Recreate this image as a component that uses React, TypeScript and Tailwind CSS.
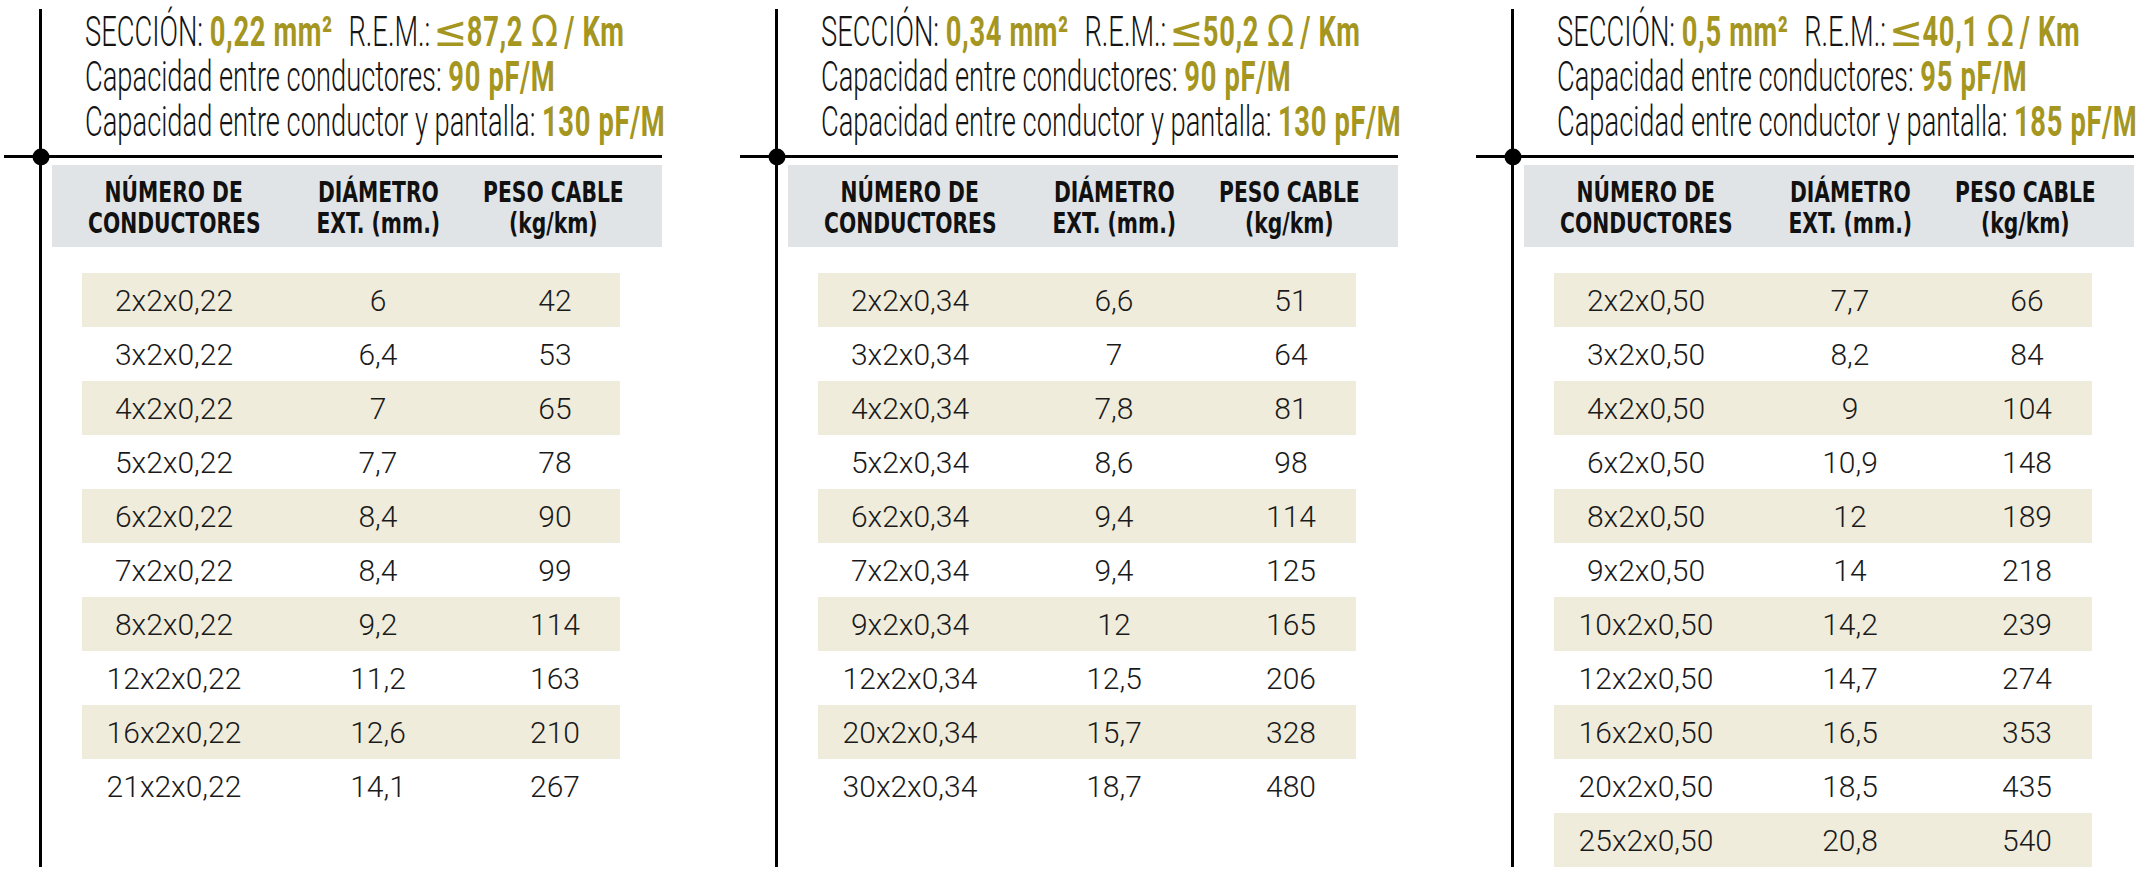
type Row = [string, string, string]

type Panel = {
  sec: string
  rem: string
  cc: string
  cp: string
  rows: Row[]
}

const panels: Panel[] = [
  {
    sec: "0,22",
    rem: "87,2",
    cc: "90",
    cp: "130",
    rows: [
      ["2x2x0,22", "6", "42"],
      ["3x2x0,22", "6,4", "53"],
      ["4x2x0,22", "7", "65"],
      ["5x2x0,22", "7,7", "78"],
      ["6x2x0,22", "8,4", "90"],
      ["7x2x0,22", "8,4", "99"],
      ["8x2x0,22", "9,2", "114"],
      ["12x2x0,22", "11,2", "163"],
      ["16x2x0,22", "12,6", "210"],
      ["21x2x0,22", "14,1", "267"],
    ],
  },
  {
    sec: "0,34",
    rem: "50,2",
    cc: "90",
    cp: "130",
    rows: [
      ["2x2x0,34", "6,6", "51"],
      ["3x2x0,34", "7", "64"],
      ["4x2x0,34", "7,8", "81"],
      ["5x2x0,34", "8,6", "98"],
      ["6x2x0,34", "9,4", "114"],
      ["7x2x0,34", "9,4", "125"],
      ["9x2x0,34", "12", "165"],
      ["12x2x0,34", "12,5", "206"],
      ["20x2x0,34", "15,7", "328"],
      ["30x2x0,34", "18,7", "480"],
    ],
  },
  {
    sec: "0,5",
    rem: "40,1",
    cc: "95",
    cp: "185",
    rows: [
      ["2x2x0,50", "7,7", "66"],
      ["3x2x0,50", "8,2", "84"],
      ["4x2x0,50", "9", "104"],
      ["6x2x0,50", "10,9", "148"],
      ["8x2x0,50", "12", "189"],
      ["9x2x0,50", "14", "218"],
      ["10x2x0,50", "14,2", "239"],
      ["12x2x0,50", "14,7", "274"],
      ["16x2x0,50", "16,5", "353"],
      ["20x2x0,50", "18,5", "435"],
      ["25x2x0,50", "20,8", "540"],
    ],
  },
]

const heads = [
  ["NÚMERO DE", "CONDUCTORES"],
  ["DIÁMETRO", "EXT. (mm.)"],
  ["PESO CABLE", "(kg/km)"],
]

// highlighted values in the spec lines
const bold = "font-bold tracking-[1px] text-[#a4961f]"
const symbol = "inline-block font-['DejaVu_Sans',sans-serif] font-normal text-[#a4961f]"

function Heading({ p }: { p: Panel }) {
  return (
    <div className="pl-[43px]">
      <div className="origin-left scale-x-[0.65] whitespace-nowrap font-['Roboto',sans-serif] text-[42px] font-light leading-[45px] text-[#141414]">
        <div>
          SECCIÓN: <span className={bold}>{p.sec} mm²</span>
          <span className="ml-[24px]">R.E.M.:</span>
          <span className={symbol + " ml-[13px] mr-[8px] scale-x-[1.5]"}>≤</span>
          <span className={bold}>{p.rem}</span>
          <span className={symbol + " ml-[17px] mr-[14px] scale-x-[1.3]"}>Ω</span>
          <span className={bold}>/ Km</span>
        </div>
        <div>
          Capacidad entre conductores: <span className={bold}>{p.cc} pF/M</span>
        </div>
        <div>
          Capacidad entre conductor y pantalla: <span className={bold}>{p.cp} pF/M</span>
        </div>
      </div>
    </div>
  )
}

function CableTable({ p }: { p: Panel }) {
  return (
    <div className="ml-[35px] h-[858px] border-l-[3px] border-black">
      <Heading p={p} />

      <div className="relative -ml-[38px] mt-[11px] h-[3px] w-[658px] bg-black">
        <div className="absolute left-[36.5px] top-1/2 h-[17px] w-[17px] -translate-x-1/2 -translate-y-1/2 rounded-full bg-black" />
      </div>

      <div className="ml-[10px] mt-[7px] grid h-[82px] w-[610px] grid-cols-[244px_164px_186px] items-center bg-[#e1e4e6] pt-[4px]">
        {heads.map((h) => (
          <div
            key={h[0]}
            className="flex flex-col items-center font-['DejaVu_Sans',sans-serif] text-[29px] font-bold leading-[31px] text-[#111]"
          >
            <span className="scale-x-[0.70] whitespace-nowrap">{h[0]}</span>
            <span className="scale-x-[0.70] whitespace-nowrap">{h[1]}</span>
          </div>
        ))}
      </div>

      <div className="ml-[40px] mt-[26px] w-[538px] font-['Roboto',sans-serif] text-[30px] font-light text-[#1a1a1a]">
        {p.rows.map((r, i) => (
          <div
            key={r[0]}
            className={`grid h-[54px] grid-cols-[184px_224px_130px] items-center text-center ${
              i % 2 === 0 ? "bg-[#efecdc]" : ""
            }`}
          >
            <span>{r[0]}</span>
            <span>{r[1]}</span>
            <span>{r[2]}</span>
          </div>
        ))}
      </div>
    </div>
  )
}

export default function App() {
  return (
    <div className="flex h-[877px] w-[2145px] overflow-hidden bg-white pl-[4px] pt-[9px]">
      {panels.map((p) => (
        <div key={p.sec} className="w-[736px] shrink-0">
          <CableTable p={p} />
        </div>
      ))}
    </div>
  )
}
